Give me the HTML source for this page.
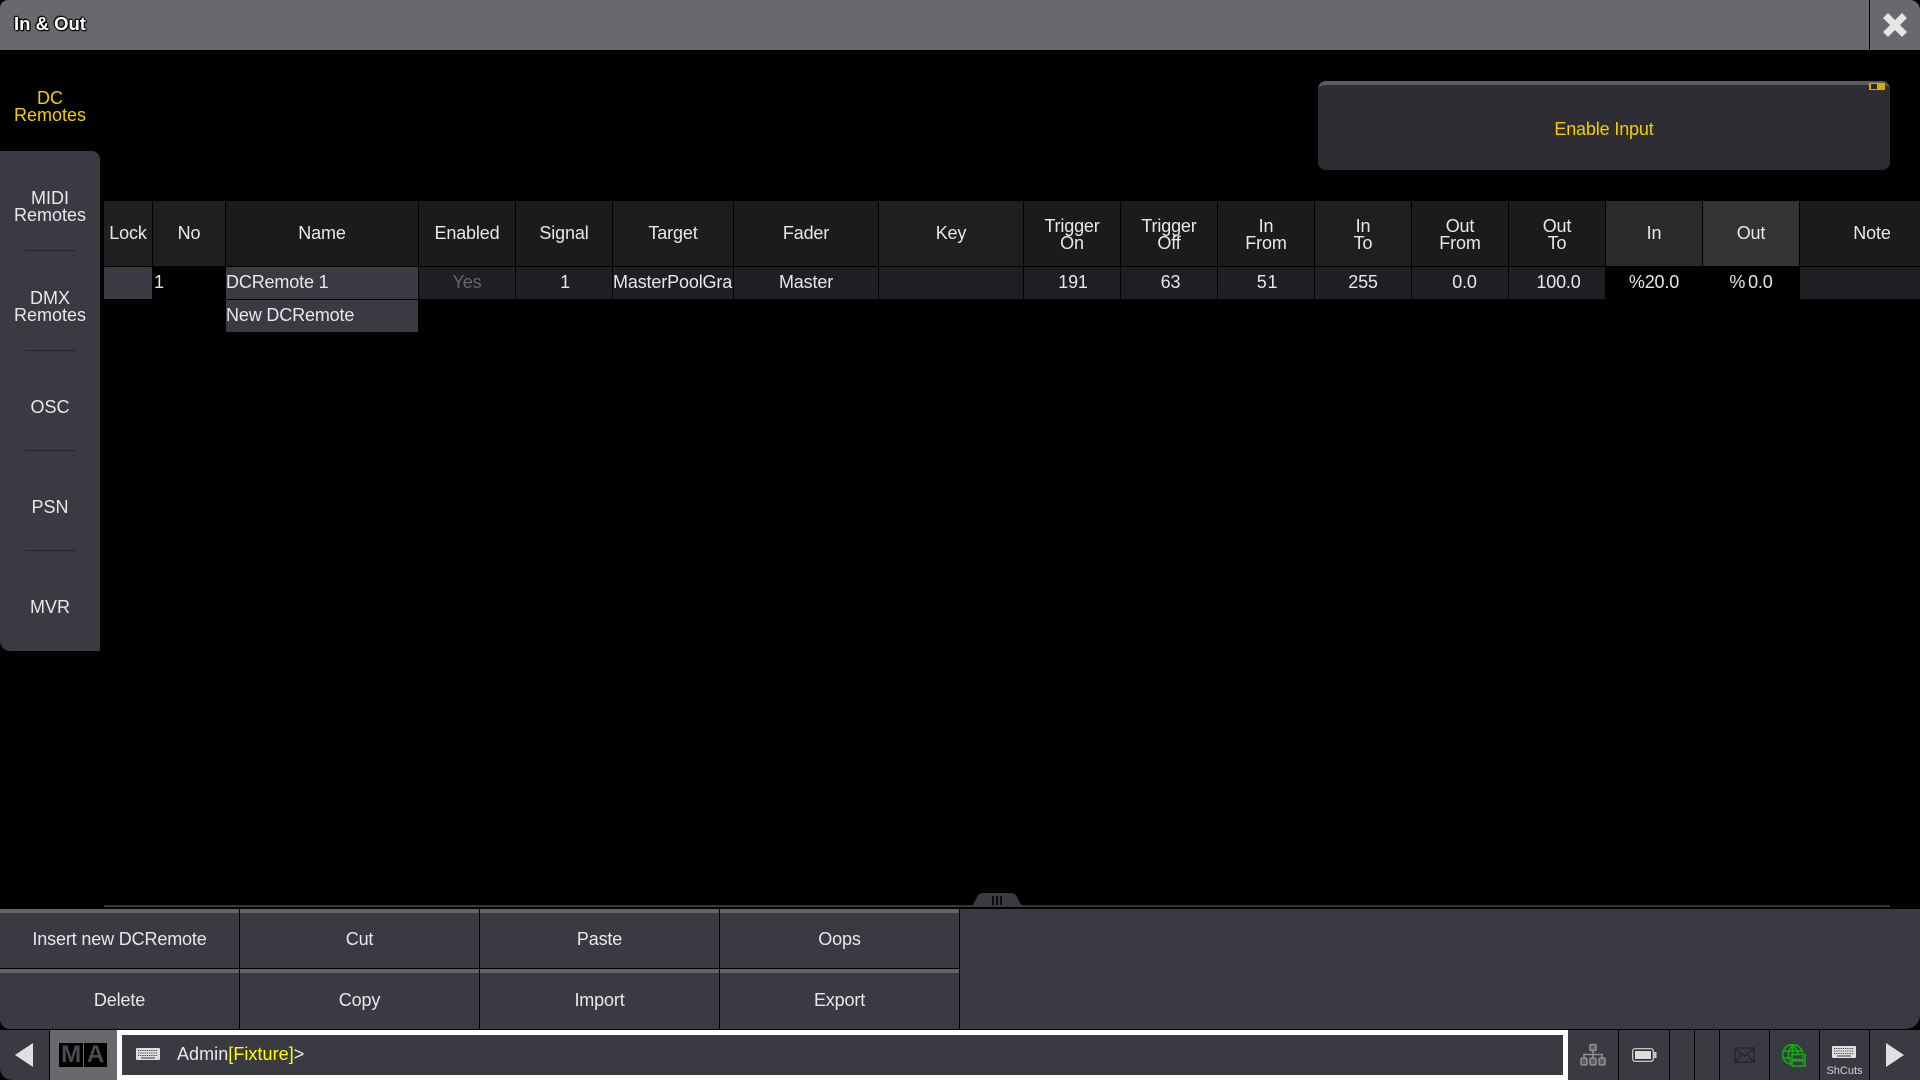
<!DOCTYPE html>
<html><head><meta charset="utf-8"><title>In &amp; Out</title>
<style>
html,body{margin:0;padding:0;width:1920px;height:1080px;overflow:hidden;background:#000}
body{position:relative;font-family:"Liberation Sans",sans-serif;font-size:18px;letter-spacing:-.15px;color:#e8e8e8}
div{position:absolute;box-sizing:border-box}
.t{text-align:center;white-space:nowrap;overflow:hidden}
.h{top:201px;height:65px;line-height:65px;text-align:center;white-space:nowrap}
.h2{line-height:17px;padding-top:17px}
.r{top:267px;height:32px;line-height:31px;text-align:center;white-space:nowrap;overflow:hidden;background:#1e1e23}
.b{height:60px;background:#3a3b42;text-align:center;border-top:4px solid #636365;white-space:nowrap}
.b1{line-height:53px}
.b2{line-height:55px}
.sep{left:25px;width:50px;height:1px;background:#26262b}
.tab{left:0;width:100px;text-align:center;line-height:17px;letter-spacing:0;color:#e8e8e8}
.v{top:1030px;width:1px;height:50px;background:#000}
svg{position:absolute;display:block}
</style></head><body>

<div style="left:0;top:0;width:1920px;height:50px;background:#68696d;border-radius:8px 10px 0 0"></div>
<div style="left:14px;top:12px;height:24px;line-height:24px;font-size:18.5px;font-weight:bold;letter-spacing:0;color:#fff;text-shadow:1px 0 1px #000,-1px 0 1px #000,0 1px 1px #000,0 -1px 1px #000,1px 1px 1px #000,-1px -1px 1px #000">In &amp; Out</div>
<div style="left:1869px;top:0;width:1px;height:50px;background:#000"></div>
<svg style="left:1883px;top:13px" width="24" height="24" viewBox="0 0 24 24"><path d="M5 5L19 19M19 5L5 19" stroke="#e6e6e6" stroke-width="7" stroke-linecap="square"/></svg>

<div class="tab" style="top:90px;height:34px;color:#f4cc00">DC<br>Remotes</div>
<div style="left:0;top:151px;width:100px;height:500px;background:#3a3b42;border-radius:0 8px 0 10px"></div>
<div class="tab" style="top:190px">MIDI<br>Remotes</div>
<div class="sep" style="top:250px"></div>
<div class="tab" style="top:290px">DMX<br>Remotes</div>
<div class="sep" style="top:350px"></div>
<div class="tab" style="top:399px">OSC</div>
<div class="sep" style="top:450px"></div>
<div class="tab" style="top:499px">PSN</div>
<div class="sep" style="top:550px"></div>
<div class="tab" style="top:599px">MVR</div>

<div style="left:1318px;top:81px;width:572px;height:89px;background:#2d2d33;border-top:4px solid #5c5c60;border-radius:8px;color:#f4cc00;text-align:center;line-height:88px">Enable Input</div>
<div style="left:1869px;top:83px;width:16px;height:7px;background:#d4ac00"></div>
<div style="left:1871px;top:84px;width:6px;height:5px;background:#2d2a10"></div>

<div class="h" style="left:104px;width:48px;background:#202020">Lock</div>
<div class="h" style="left:153px;width:72px;background:#1f1f1f">No</div>
<div class="h" style="left:226px;width:192px;background:#1b1b1b">Name</div>
<div class="h" style="left:419px;width:96px;background:#1b1b1b">Enabled</div>
<div class="h" style="left:516px;width:96px;background:#1b1b1b">Signal</div>
<div class="h" style="left:613px;width:120px;background:#1c1c1c">Target</div>
<div class="h" style="left:734px;width:144px;background:#1b1b1b">Fader</div>
<div class="h" style="left:879px;width:144px;background:#1f1f1f">Key</div>
<div class="h h2" style="left:1024px;width:96px;background:#1b1b1b">Trigger<br>On</div>
<div class="h h2" style="left:1121px;width:96px;background:#1b1b1b">Trigger<br>Off</div>
<div class="h h2" style="left:1218px;width:96px;background:#1b1b1b">In<br>From</div>
<div class="h h2" style="left:1315px;width:96px;background:#1f1f1f">In<br>To</div>
<div class="h h2" style="left:1412px;width:96px;background:#1b1b1b">Out<br>From</div>
<div class="h h2" style="left:1509px;width:96px;background:#1b1b1b">Out<br>To</div>
<div class="h" style="left:1606px;width:96px;background:#2a2a2a">In</div>
<div class="h" style="left:1703px;width:96px;background:#333">Out</div>
<div class="h" style="left:1800px;width:120px;background:#1b1b1b;padding-left:24px">Note</div>

<div class="r" style="left:104px;width:48px;background:#3a3b42"></div>
<div class="r" style="left:153px;width:72px;background:#000;text-align:left;padding-left:1px">1</div>
<div class="r" style="left:226px;width:192px;background:#3a3b42;text-align:left">DCRemote 1</div>
<div class="r" style="left:419px;width:96px;color:#666">Yes</div>
<div class="r" style="left:516px;width:96px;padding-left:2px">1</div>
<div class="r" style="left:613px;width:120px;text-align:left">MasterPoolGrandMaster</div>
<div class="r" style="left:734px;width:144px">Master</div>
<div class="r" style="left:879px;width:144px"></div>
<div class="r" style="left:1024px;width:96px;padding-left:2px">191</div>
<div class="r" style="left:1121px;width:96px;padding-left:3px">63</div>
<div class="r" style="left:1218px;width:96px;padding-left:3px;letter-spacing:.8px">51</div>
<div class="r" style="left:1315px;width:96px">255</div>
<div class="r" style="left:1412px;width:96px;padding-left:9px">0.0</div>
<div class="r" style="left:1509px;width:96px;padding-left:3px">100.0</div>
<div class="r" style="left:1606px;width:96px;background:#000">%20.0</div>
<div class="r" style="left:1703px;width:96px;background:#000;word-spacing:-2px">% 0.0</div>
<div class="r" style="left:1800px;width:120px"></div>
<div class="r" style="left:226px;top:300px;width:192px;background:#3a3b42;text-align:left">New DCRemote</div>

<div style="left:104px;top:905px;width:1786px;height:2px;background:#36373c"></div>
<svg style="left:970px;top:892px" width="54" height="14" viewBox="0 0 54 14"><path d="M0 14C3 14 4 11 7 5C9 1 11 1 14 1H40C43 1 45 1 47 5C50 11 51 14 54 14Z" fill="#3a3b42"/><path d="M23 4V13M27 4V13M31 4V13" stroke="#000" stroke-width="1.6"/></svg>

<div style="left:0;top:909px;width:1920px;height:120px;background:#3a3b42;border-radius:0 0 14px 10px"></div>
<div class="b b1" style="left:0;top:909px;width:239px">Insert new DCRemote</div>
<div class="b b1" style="left:240px;top:909px;width:239px">Cut</div>
<div class="b b1" style="left:480px;top:909px;width:239px">Paste</div>
<div class="b b1" style="left:720px;top:909px;width:239px">Oops</div>
<div class="b b2" style="left:0;top:969px;width:239px;border-radius:0 0 0 10px">Delete</div>
<div class="b b2" style="left:240px;top:969px;width:239px">Copy</div>
<div class="b b2" style="left:480px;top:969px;width:239px">Import</div>
<div class="b b2" style="left:720px;top:969px;width:239px">Export</div>
<div style="left:0;top:968px;width:960px;height:1px;background:#000"></div>
<div style="left:239px;top:909px;width:1px;height:120px;background:#000"></div>
<div style="left:479px;top:909px;width:1px;height:120px;background:#000"></div>
<div style="left:719px;top:909px;width:1px;height:120px;background:#000"></div>
<div style="left:959px;top:909px;width:1px;height:120px;background:#000"></div>

<div style="left:0;top:1030px;width:1920px;height:50px;background:#3a3b42"></div>
<div style="left:0;top:1030px;width:12px;height:50px;background:#000"></div>
<div style="left:0;top:1030px;width:49px;height:50px;background:#3a3b42;border-radius:0 0 0 12px"></div>
<div style="left:49px;top:1030px;width:1px;height:50px;background:#000"></div>
<div style="left:50px;top:1030px;width:67px;height:50px;background:#68696d"></div>
<svg style="left:15px;top:1043px" width="19" height="24" viewBox="0 0 19 24"><path d="M18 0V24L0 12Z" fill="#e0e0e0"/></svg>
<div style="left:59px;top:1043px;width:24px;height:24px;background:#000;color:#4c4d52;font-weight:bold;font-size:24px;line-height:24px;text-align:center;overflow:hidden">M</div>
<div style="left:84px;top:1043px;width:23px;height:24px;background:#000;color:#4c4d52;font-weight:bold;font-size:24px;line-height:24px;text-align:center">A</div>

<div style="left:117px;top:1030px;width:1451px;height:50px;background:#3a3b42;border:5px solid #fff"></div>
<svg style="left:136px;top:1048px" width="24" height="12" viewBox="0 0 24 12"><rect width="24" height="12" rx="1" fill="#e0e0e0"/><path d="M2 2.500H22M2 5H22M2 7.500H22" stroke="#3a3b42" stroke-width="1" stroke-dasharray="1.200 1"/><path d="M5 10H19" stroke="#3a3b42" stroke-width="1"/></svg>
<div style="left:177px;top:1042px;height:24px;line-height:24px;letter-spacing:.05px;white-space:nowrap">Admin<span style="color:#ffff00">[Fixture]</span>&gt;</div>

<div class="v" style="left:1618px"></div><div class="v" style="left:1669px"></div><div class="v" style="left:1694px"></div><div class="v" style="left:1719px"></div><div class="v" style="left:1769px"></div><div class="v" style="left:1819px"></div><div class="v" style="left:1869px"></div>

<svg style="left:1580px;top:1043px" width="26" height="24" viewBox="0 0 26 24" fill="none" stroke="#8e8e90" stroke-width="1.6"><rect x="10" y="1.500" width="6" height="6" rx="1" fill="#5c5d60"/><path d="M13 7.500V15M4 15V11.500H22V15"/><rect x="1" y="15" width="6" height="7" rx="1.500" fill="#5c5d60"/><rect x="10" y="15" width="6" height="7" rx="1.500" fill="#5c5d60"/><rect x="19" y="15" width="6" height="7" rx="1.500" fill="#5c5d60"/></svg>
<svg style="left:1632px;top:1048px" width="25" height="14" viewBox="0 0 25 14"><rect x=".7" y=".7" width="20.600" height="12.600" rx="2.500" fill="#2e2e33" stroke="#c4c4c4" stroke-width="1.400"/><rect x="3" y="3" width="16" height="8" fill="#dcdcdc"/><rect x="22" y="4" width="2.500" height="6" fill="#c8c8c8"/></svg>
<svg style="left:1734px;top:1047px" width="21" height="16" viewBox="0 0 21 16" fill="none" stroke="#28282b" stroke-width="1.600"><rect x="1" y="1" width="19" height="14"/><path d="M1 1L10.500 9L20 1M1 15L8 7M20 15L13 7"/></svg>
<svg style="left:1782px;top:1044px" width="24" height="23" viewBox="0 0 24 23" fill="none" stroke="#10b010" stroke-width="1.500"><path d="M11 20.500A10 10 0 1 1 20.500 9"/><path d="M10.500 1C5 7 5 14 10 20.500M10.500 1C15 5 16 8 16 10M10.500 1V14M1.500 7H19M1.500 14H9"/><rect x="10" y="10.500" width="13" height="5" fill="#3a3b42"/><rect x="10" y="17" width="13" height="5" fill="#3a3b42"/><path d="M20 13H21.500M20 19.500H21.500"/></svg>
<svg style="left:1832px;top:1046px" width="24" height="12" viewBox="0 0 24 12"><rect width="24" height="12" rx="1" fill="#e0e0e0"/><path d="M2 2.500H22M2 5H22M2 7.500H22" stroke="#3a3b42" stroke-width="1" stroke-dasharray="1.200 1"/><path d="M5 10H19" stroke="#3a3b42" stroke-width="1"/></svg>
<div class="t" style="left:1820px;top:1064px;width:49px;height:14px;line-height:14px;font-size:11px;letter-spacing:0;color:#d4d4d4">ShCuts</div>
<svg style="left:1886px;top:1043px" width="19" height="24" viewBox="0 0 19 24"><path d="M0 0V24L18 12Z" fill="#e0e0e0"/></svg>

</body></html>
